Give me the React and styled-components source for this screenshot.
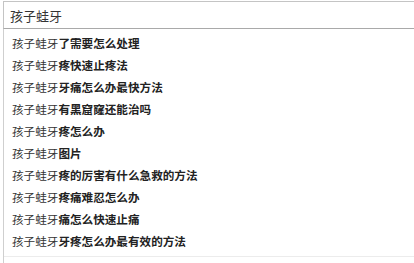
import React from 'react';
import styled, { createGlobalStyle } from 'styled-components';

const GlobalStyle = createGlobalStyle`
  html, body {
    margin: 0;
    padding: 0;
    background: #ffffff;
    overflow: hidden;
  }
  body {
    font-family: "Noto Sans CJK SC", "Liberation Sans", sans-serif;
  }
`;

const Page = styled.div`
  width: 414px;
  height: 263px;
  padding: 1px 0 0 3px;
  box-sizing: border-box;
  overflow: hidden;
`;

const SearchBox = styled.div`
  width: 440px;
  height: 28px;
  box-sizing: border-box;
  border: 1px solid #c4c4c4;
  border-bottom-color: #a9a9a9;
  display: flex;
  align-items: center;
  padding-left: 6px;
  font-size: 13px;
  color: #333;
`;

const Suggest = styled.div`
  width: 440px;
  border-left: 1px solid #cfcfcf;
  padding-top: 3px;
  height: 240px;
  box-sizing: border-box;
`;

const Row = styled.div`
  height: 22px;
  display: flex;
  align-items: center;
  padding-left: 8px;
  font-size: 11.6px;
  color: #333;
  white-space: nowrap;
`;

const Bold = styled.b`
  font-weight: 700;
  color: #222;
`;

const Footer = styled.div`
  margin-top: 4px;
  border-top: 1px solid #ececec;
`;

const query = '孩子蛙牙';
const items = [
  '了需要怎么处理',
  '疼快速止疼法',
  '牙痛怎么办最快方法',
  '有黑窟窿还能治吗',
  '疼怎么办',
  '图片',
  '疼的厉害有什么急救的方法',
  '疼痛难忍怎么办',
  '痛怎么快速止痛',
  '牙疼怎么办最有效的方法',
];

export default function App() {
  return (
    <Page>
      <GlobalStyle />
      <SearchBox>{query}</SearchBox>
      <Suggest>
        {items.map((s) => (
          <Row key={s}>
            {query}
            <Bold>{s}</Bold>
          </Row>
        ))}
        <Footer />
      </Suggest>
    </Page>
  );
}
